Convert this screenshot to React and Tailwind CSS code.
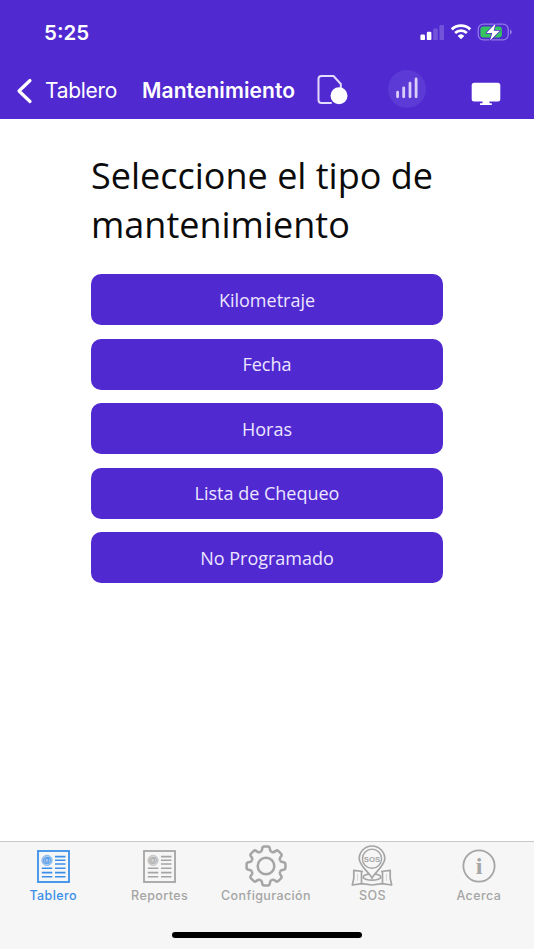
import React from "react";

const maintenanceTypes = [
  "Kilometraje",
  "Fecha",
  "Horas",
  "Lista de Chequeo",
  "No Programado",
];

const gearAngles = [0, 45, 90, 135, 180, 225, 270, 315];

/* STATUS BAR ICONS */

function SignalIcon() {
  return (
    <svg width="26" height="18" viewBox="0 0 26 18" fill="white">
      <rect x="1.400" y="11.500" width="4.600" height="5.600" rx="1.200" />
      <rect x="7.800" y="8.800" width="4.600" height="8.300" rx="1.200" />
      <rect x="14.200" y="5.500" width="4.600" height="11.600" rx="1.200" opacity="0.200" />
      <rect x="20.400" y="2.100" width="4.600" height="15" rx="1.200" opacity="0.200" />
    </svg>
  );
}

function WifiIcon() {
  return (
    <svg width="22" height="18" viewBox="0 0 22 18" fill="none" stroke="white">
      <path d="M1.800 6.400a13.200 13.200 0 0 1 18.400 0" strokeWidth="2.900" />
      <path d="M5.100 10a8.400 8.400 0 0 1 11.800 0" strokeWidth="2.700" />
      <path
        d="M8 12.900a4.400 4.400 0 0 1 6 0l-3 3z"
        fill="white"
        strokeWidth="0.600"
        strokeLinejoin="round"
      />
    </svg>
  );
}

function BatteryIcon() {
  return (
    <svg width="36" height="20" viewBox="0 0 36 20" fill="none">
      <rect x="1.200" y="2.200" width="30" height="15.600" rx="5" stroke="#9079e3" strokeWidth="1.300" />
      <path d="M33 7.500c2.200.700 2.200 4.300 0 5z" fill="#9c85e7" />
      <rect x="3.400" y="4.400" width="21.500" height="11.200" rx="3" fill="#35c35f" />
      <path
        d="M18.600 1.600L9.400 11h5.900l-2.300 7.400L22.800 8.800h-6.200z"
        fill="white"
        stroke="#5029d1"
        strokeWidth="1.600"
        paintOrder="stroke"
        strokeLinejoin="round"
      />
    </svg>
  );
}

/* HEADER ICONS */

function SimIcon() {
  return (
    <svg width="32" height="32" viewBox="0 0 32 32" fill="none">
      <path
        d="M15 29H5.500a3 3 0 0 1-3-3V5a3 3 0 0 1 3-3h12l7.300 8v3.500"
        stroke="#e3dbfc"
        strokeWidth="2"
        strokeLinecap="round"
        strokeLinejoin="round"
      />
      <circle cx="23" cy="21.800" r="8.500" fill="white" />
    </svg>
  );
}

function BarsIcon() {
  return (
    <svg width="38" height="38" viewBox="0 0 38 38">
      <circle cx="19" cy="19" r="19" fill="#5c3ad5" />
      <g stroke="#d9cffa" strokeWidth="2.800" strokeLinecap="round">
        <path d="M9.600 22.200v4.600M15.700 17.800v9M22 13.200v13.600M28.100 9v17.800" />
      </g>
    </svg>
  );
}

function MonitorIcon() {
  return (
    <svg width="30" height="24" viewBox="0 0 30 24" fill="white">
      <rect x="0.700" y="0.800" width="28.600" height="18.600" rx="2.500" />
      <path d="M11.500 19h7v2.200h2.300v1.800H9v-1.800h2.500z" />
    </svg>
  );
}

/* TAB BAR ICONS */

function NewsIcon() {
  return (
    <svg width="33" height="33" viewBox="0 0 33 33" fill="none" stroke="currentColor">
      <rect x="1" y="1" width="31" height="31" strokeWidth="1.800" />
      <circle cx="10" cy="10.400" r="5.200" fill="currentColor" fillOpacity="0.400" strokeWidth="0.800" strokeOpacity="0.600" />
      <text
        x="10"
        y="13.200"
        textAnchor="middle"
        fill="currentColor"
        stroke="none"
        className="font-['Liberation_Sans'] text-[9px] font-bold"
      >
        @
      </text>
      <path
        d="M18 6.600h10.500M18 10.300h10.500M18 14h10.500M4.800 18.300h10.500M18 18.300h10.500M4.800 22.600h10.500M18 22.600h10.500M4.800 26.800h10.500M18 26.800h10.500"
        strokeWidth="1.600"
      />
    </svg>
  );
}

function GearIcon() {
  return (
    <svg width="42" height="42" viewBox="-21 -21 42 42" fill="none" stroke="currentColor" strokeWidth="2.500">
      {gearAngles.map((angle) => (
        <path
          key={angle}
          transform={`rotate(${angle})`}
          d="M-5.800-14Q-4.300-14.600-4-16.300L-3.800-17.600Q-3.500-19.400-1.800-19.400H1.800Q3.500-19.400 3.800-17.600L4-16.300Q4.300-14.600 5.800-14"
        />
      ))}
      <circle r="8.300" />
    </svg>
  );
}

function SosIcon() {
  return (
    <svg width="42" height="42" viewBox="0 0 42 42" fill="none" stroke="currentColor" strokeWidth="1.700" strokeLinejoin="round">
      <path d="M12 26.500l-9.200-1.200v8L1.300 40l9.700-1.300 10 1.300 10-1.300 9.700 1.300-1.500-6.700v-8L30 26.500" />
      <path d="M10.500 26.500v12.200M31.500 26.500v12.200" />
      <path d="M6.500 29v7M35.500 29v7" strokeWidth="0.800" opacity="0.500" />
      <ellipse cx="21" cy="32" rx="8.800" ry="3.200" />
      <path
        d="M21 33C18.500 28 8.200 20.500 8.200 13.800a12.800 12.800 0 0 1 25.600 0C33.800 20.500 23.500 28 21 33z"
        fill="#f6f6f6"
      />
      <circle cx="21" cy="13.700" r="9.600" strokeWidth="1.400" />
      <text
        x="21"
        y="16.600"
        textAnchor="middle"
        fill="currentColor"
        stroke="none"
        className="font-['Liberation_Sans'] text-[7.8px] font-bold"
      >
        SOS
      </text>
    </svg>
  );
}

function InfoIcon() {
  return (
    <svg width="34" height="34" viewBox="0 0 34 34" fill="none" stroke="currentColor">
      <circle cx="17" cy="17" r="15.600" strokeWidth="1.800" />
      <text
        x="17"
        y="24.800"
        textAnchor="middle"
        fill="currentColor"
        stroke="none"
        className="font-['Liberation_Serif'] text-[24px] font-bold"
      >
        i
      </text>
    </svg>
  );
}

const tabs = [
  { label: "Tablero", icon: NewsIcon, active: true },
  { label: "Reportes", icon: NewsIcon },
  { label: "Configuración", icon: GearIcon },
  { label: "SOS", icon: SosIcon },
  { label: "Acerca", icon: InfoIcon },
];

export default function App() {
  return (
    <div className="flex h-[950px] w-[534px] flex-col overflow-hidden bg-white font-[Inter,sans-serif]">

      {/* HEADER */}

      <header className="h-[119px] shrink-0 bg-[#5029d1] text-white">

        <div className="flex h-[62px] items-center justify-between pt-[2px] pr-[21px] pl-[44px]">
          <span className="pt-[2px] text-[20.5px] font-semibold">5:25</span>
          <div className="flex items-center gap-[5px]">
            <SignalIcon />
            <WifiIcon />
            <BatteryIcon />
          </div>
        </div>

        <div className="flex h-[57px] items-center">
          <button className="flex items-center pl-[16px]">
            <svg width="17" height="26" viewBox="0 0 17 26" fill="none">
              <path
                d="M14 2.500L3 13l11 10.500"
                stroke="white"
                strokeWidth="3.200"
                strokeLinecap="round"
                strokeLinejoin="round"
              />
            </svg>
            <span className="ml-[12px] w-[97px] text-left text-[21px] tracking-[-0.3px]">Tablero</span>
          </button>
          <h1 className="w-[175px] text-[21px] font-semibold tracking-[0.1px]">Mantenimiento</h1>
          <div className="-ml-px pb-[2px]">
            <SimIcon />
          </div>
          <div className="ml-[40px] pb-[3px]">
            <BarsIcon />
          </div>
          <div className="mt-[7px] ml-[45px]">
            <MonitorIcon />
          </div>
        </div>

      </header>

      {/* CONTENT */}

      <main className="flex-1 px-[91px] pt-[32px]">
        <h2 className="h-[123px] font-['Open_Sans',sans-serif] text-[36px] leading-[49px] whitespace-nowrap text-[#0b0b0b]">
          Seleccione el tipo de
          <br />
          mantenimiento
        </h2>
        <div className="flex flex-col gap-[13.5px]">
          {maintenanceTypes.map((type) => (
            <button
              key={type}
              className="h-[51px] w-[352px] rounded-[10px] bg-[#5029d1] pt-px font-['Open_Sans',sans-serif] text-[18px] text-[#ece6ff]"
            >
              {type}
            </button>
          ))}
        </div>
      </main>

      {/* TAB BAR */}

      <nav className="flex h-[108px] shrink-0 flex-col border-t border-[#c9c9c9] bg-[#f6f6f6]">
        <div className="mr-[2px] grid grid-cols-5">
          {tabs.map(({ label, icon: Icon, active }) => (
            <div
              key={label}
              className={`flex flex-col items-center ${active ? "text-[#3b8fe8]" : "text-[#a5a5a5]"}`}
            >
              <div className="flex h-[48px] items-center justify-center">
                <Icon />
              </div>
              <span className="text-[12.5px] leading-[11px] font-medium tracking-[0.4px]">{label}</span>
            </div>
          ))}
        </div>
        <div className="mx-auto mt-[31px] h-[6px] w-[190px] rounded-full bg-black" />
      </nav>
      <div className="h-px shrink-0 bg-white" />

    </div>
  );
}
